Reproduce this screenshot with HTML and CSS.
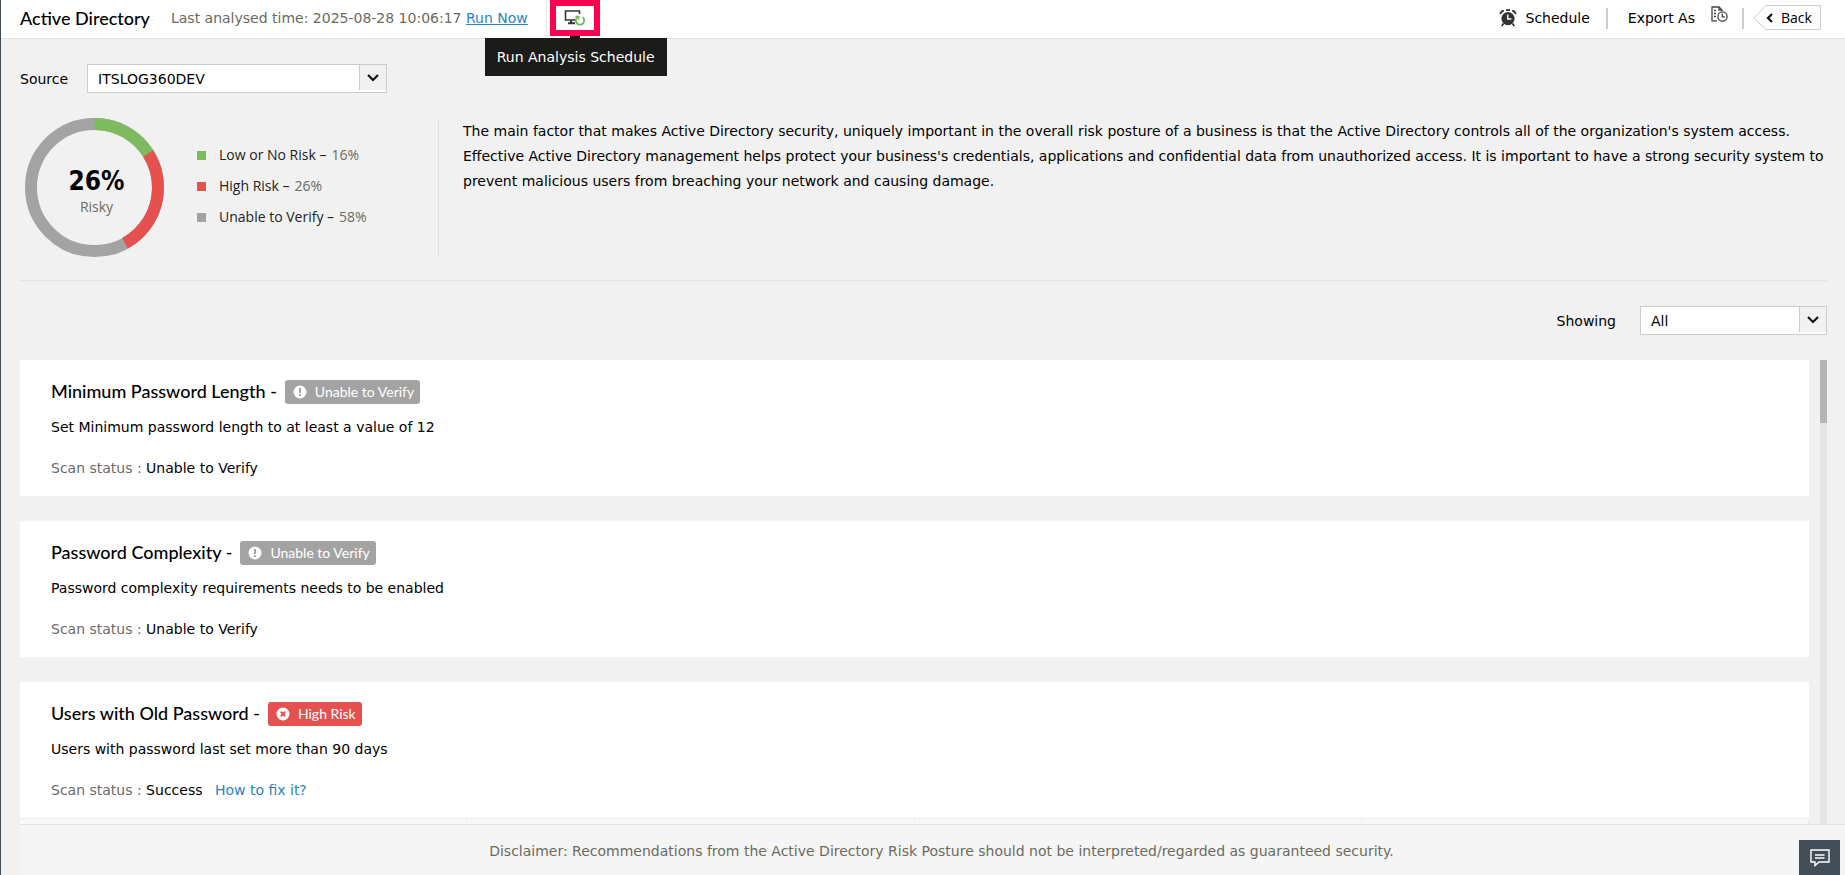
FILE: index.html
```html
<!DOCTYPE html>
<html lang="en">
<head>
  <meta charset="UTF-8" />
  <title>Active Directory Risk Posture</title>
  <link rel="stylesheet" href="styles.css">
</head>
<body>

  <!-- Top bar -->
  <header class="topbar">
    <h1>Active Directory</h1>
    <p class="analysed">Last analysed time: 2025-08-28 10:06:17 <a href="#">Run Now</a></p>
    <div class="run-schedule">
      <button class="run-button" aria-label="Run Analysis Schedule">
        <svg width="22" height="16" viewBox="0 0 22 16" fill="none">
          <path d="M11 10H1.5V1H15.5V4" stroke="#33383c" stroke-width="1.6"/>
          <path d="M7 10V13M4 13.2H11" stroke="#33383c" stroke-width="2"/>
          <path d="M18.6 7.2A4.2 4.2 0 1 1 13.4 7.2" stroke="#6fb456" stroke-width="1.7"/>
          <path d="M11.4 6.4H14.6V9.6" stroke="#6fb456" stroke-width="1.5"/>
        </svg>
      </button>
      <span class="tooltip" role="tooltip">Run Analysis Schedule</span>
    </div>

    <div class="actions">
      <button class="schedule">
        <svg width="18" height="18" viewBox="0 0 18 18">
          <circle cx="9" cy="9.6" r="6.6" fill="#333"/>
          <path d="M1.2 5.2A3 3 0 0 1 5 1.6ZM16.8 5.2A3 3 0 0 0 13 1.6Z" fill="#333" stroke="#333"/>
          <path d="M7 1.2H11M4.4 14.6L2.8 17M13.6 14.6L15.2 17" stroke="#333" stroke-width="1.8"/>
          <path d="M8.8 5.4V10H12.4" stroke="#fff" stroke-width="1.4" fill="none"/>
        </svg>
        Schedule
      </button>
      <span class="bar"></span>
      <button class="export">
        Export As
        <svg width="17" height="16" viewBox="0 0 17 16" fill="none" stroke="#444" stroke-width="1.3">
          <path d="M6 14.8H1V1H8L11 4V5"/>
          <path d="M8 1V4H11M3 4.5H5M3 7.5H5M3 10.5H5"/>
          <circle cx="11.5" cy="10.5" r="4.6"/>
          <path d="M11.3 7.6V10.8H14"/>
        </svg>
      </button>
      <span class="bar"></span>
      <a class="back" href="#">
        <svg class="back-shape" width="68" height="26" viewBox="0 0 68 26" fill="#fff" stroke="#ccc">
          <path d="M67.5 .5H13L.7 13L13 24.5H67.5Z"/>
        </svg>
        <svg width="8" height="10" viewBox="0 0 8 10" fill="none" stroke="#111" stroke-width="2.2">
          <path d="M6 1L2 5L6 9"/>
        </svg>
        Back
      </a>
    </div>
  </header>

  <main>
    <div class="source">
      <label for="source">Source</label>
      <div class="select source-select">
        <select id="source">
          <option>ITSLOG360DEV</option>
        </select>
        <span class="arrow"><svg width="12" height="8" viewBox="0 0 12 8"><path d="M1 1L6 6L11 1" fill="none" stroke="#111" stroke-width="2.2"/></svg></span>
      </div>
    </div>

    <!-- Risk summary -->
    <section class="summary">
      <div class="donut">
        <svg width="139" height="139" viewBox="0 0 139 139" fill="none" stroke-width="12">
          <circle cx="69.5" cy="69.5" r="63.5" stroke="#a3a3a3"/>
          <circle cx="69.5" cy="69.5" r="63.5" stroke="#7dbb5e" pathLength="100" stroke-dasharray="16 84" transform="rotate(-90 69.5 69.5)"/>
          <circle cx="69.5" cy="69.5" r="63.5" stroke="#e4514f" pathLength="100" stroke-dasharray="26 74" stroke-dashoffset="-16" transform="rotate(-90 69.5 69.5)"/>
        </svg>
        <div class="donut-text">
          <strong>26%</strong>
          <span>Risky</span>
        </div>
      </div>
      <ul class="legend">
        <li class="low">Low or No Risk – <span>16%</span></li>
        <li class="high">High Risk – <span>26%</span></li>
        <li class="unable">Unable to Verify – <span>58%</span></li>
      </ul>
      <p class="description">The main factor that makes Active Directory security, uniquely important in the overall risk posture of a business is that the Active Directory controls all of the organization's system access. Effective Active Directory management helps protect your business's credentials, applications and confidential data from unauthorized access. It is important to have a strong security system to prevent malicious users from breaching your network and causing damage.</p>
    </section>

    <div class="filter">
      <label for="showing">Showing</label>
      <div class="select showing-select">
        <select id="showing">
          <option>All</option>
        </select>
        <span class="arrow"><svg width="12" height="8" viewBox="0 0 12 8"><path d="M1 1L6 6L11 1" fill="none" stroke="#111" stroke-width="2.2"/></svg></span>
      </div>
    </div>

    <!-- Rules -->
    <div class="rules">
      <div class="rule-list">
        <article class="card">
          <h2>Minimum Password Length -
            <span class="badge">
              <svg width="14" height="14" viewBox="0 0 14 14"><circle cx="7" cy="7" r="6.5" fill="#fff"/><path d="M7 3V8M7 9.2V11" stroke="#a3a3a3" stroke-width="2"/></svg>
              Unable to Verify
            </span>
          </h2>
          <p>Set Minimum password length to at least a value of 12</p>
          <p class="status"><span>Scan status :</span> Unable to Verify</p>
        </article>

        <article class="card">
          <h2>Password Complexity -
            <span class="badge">
              <svg width="14" height="14" viewBox="0 0 14 14"><circle cx="7" cy="7" r="6.5" fill="#fff"/><path d="M7 3V8M7 9.2V11" stroke="#a3a3a3" stroke-width="2"/></svg>
              Unable to Verify
            </span>
          </h2>
          <p>Password complexity requirements needs to be enabled</p>
          <p class="status"><span>Scan status :</span> Unable to Verify</p>
        </article>

        <article class="card">
          <h2>Users with Old Password -
            <span class="badge badge-high">
              <svg width="14" height="14" viewBox="0 0 14 14"><circle cx="7" cy="7" r="6.5" fill="#fff"/><path d="M4.8 4.8L9.2 9.2M9.2 4.8L4.8 9.2" stroke="#e4514f" stroke-width="2"/></svg>
              High Risk
            </span>
          </h2>
          <p>Users with password last set more than 90 days</p>
          <p class="status"><span>Scan status :</span> Success <a href="#">How to fix it?</a></p>
          <div class="columns"><i></i><i></i><i></i><i></i></div>
        </article>
      </div>
      <div class="scrollbar"><div class="thumb"></div></div>
    </div>
  </main>

  <footer>Disclaimer: Recommendations from the Active Directory Risk Posture should not be interpreted/regarded as guaranteed security.</footer>

  <button class="chat" aria-label="Chat">
    <svg width="20" height="18" viewBox="0 0 20 18" fill="none" stroke="#fff" stroke-width="1.4">
      <path d="M1 1H19V13H9L5 16.5V13H1Z"/>
      <path d="M5 6H14.5M5 9H14.5"/>
    </svg>
  </button>

</body>
</html>
```

FILE: styles.css
```css
* {
  box-sizing: border-box;
}

body {
  margin: 0;
  height: 100vh;
  display: flex;
  flex-direction: column;
  overflow: hidden;
  border-left: 1px solid #3f4b55;
  background: #f1f1f1;
  color: #000;
  font-family: "DejaVu Sans", Verdana, sans-serif;
  font-size: 14px;
  line-height: 20px;
}

h1, h2, p, ul {
  margin: 0;
  padding: 0;
}

a {
  color: #2a83c4;
}

button, select {
  font: inherit;
  color: inherit;
  border: none;
  padding: 0;
  background: none;
}

button {
  cursor: pointer;
}

/* Top bar */
.topbar {
  display: flex;
  align-items: center;
  height: 39px;
  flex-shrink: 0;
  padding: 0 24px 2px 19px;
  background: #fff;
  border-bottom: 1px solid #e3e3e3;
}

h1, h2 {
  font-family: Lato, sans-serif;
  font-size: 18px;
  font-weight: 500;
}

.analysed {
  margin-left: 21px;
  color: #6b6b5f;
}

.run-schedule {
  position: relative;
  margin-left: 18px;
  padding-left: 3px;
  border-left: 1px solid #eee;
}

.run-button {
  display: flex;
  align-items: center;
  justify-content: center;
  width: 50px;
  height: 36px;
  border: 6px solid #ff0050;
}

.tooltip {
  position: absolute;
  top: 38px;
  left: -62px;
  padding: 9px 12px;
  background: #1b1b19;
  color: #fff;
  white-space: nowrap;
  z-index: 1;
}

.tooltip::before {
  content: "";
  position: absolute;
  top: -2px;
  left: 85px;
  width: 10px;
  height: 2px;
  background: #3b0d16;
}

.actions {
  display: flex;
  align-items: center;
  margin-left: auto;
}

.schedule, .export {
  display: flex;
  align-items: center;
  gap: 9px;
}

.export {
  gap: 16px;
}

.export svg {
  margin-bottom: 8px;
}

.bar {
  width: 2px;
  height: 21px;
  margin: 0 20px 0 16px;
  background: #ccc;
}

.export + .bar {
  margin: 0 9px 0 14px;
}

.back {
  position: relative;
  isolation: isolate;
  display: flex;
  align-items: center;
  gap: 7px;
  width: 68px;
  height: 26px;
  padding-left: 13px;
  color: #000;
  font-family: "Open Sans", sans-serif;
  text-decoration: none;
}

.back-shape {
  position: absolute;
  inset: 0;
  z-index: -1;
}

/* Content */
main {
  flex: 1;
  min-height: 0;
  display: flex;
  flex-direction: column;
  padding: 25px 18px 0 19px;
}

.source {
  display: flex;
  align-items: center;
  gap: 19px;
}

.select {
  display: grid;
  grid-template-columns: 1fr 27px;
  height: 29px;
  border: 1px solid #ccc;
  background: #fff;
}

.source-select {
  width: 300px;
}

.showing-select {
  width: 187px;
}

.select select {
  grid-area: 1 / 1 / 2 / 3;
  appearance: none;
  padding-left: 10px;
}

.arrow {
  grid-area: 1 / 2;
  display: flex;
  align-items: center;
  justify-content: center;
  margin-bottom: 2px;
  border-left: 1px solid #ccc;
  background: #f1f1f1;
  pointer-events: none;
}

.summary {
  display: flex;
  padding: 25px 0 23px 5px;
  border-bottom: 1px solid #e3e3e3;
}

.donut {
  display: grid;
  height: 139px;
}

.donut > * {
  grid-area: 1 / 1;
}

.donut-text {
  display: flex;
  flex-direction: column;
  align-items: center;
  padding: 48px 0 0 4px;
  font-family: "Open Sans", sans-serif;
  color: #6b6b5f;
}

.donut-text strong {
  color: #000;
  font-family: "DejaVu Sans Condensed", "DejaVu Sans", sans-serif;
  font-size: 26px;
  line-height: 31px;
}

.legend {
  width: 275px;
  padding: 27px 0 0 33px;
  border-right: 1px solid #e3e3e3;
  list-style: none;
  font-family: "Open Sans", sans-serif;
  color: #222;
}

.legend li {
  display: flex;
  align-items: center;
  gap: 5px;
  margin-bottom: 11px;
}

.legend li::before {
  content: "";
  width: 9px;
  height: 9px;
  margin-right: 8px;
  background: #a3a3a3;
}

.legend .low::before {
  background: #7dbb5e;
}

.legend .high::before {
  background: #e4514f;
}

.legend span {
  color: #6b6b5f;
}

.description {
  flex: 1;
  padding: 1px 0 0 24px;
  line-height: 25px;
}

.filter {
  display: flex;
  align-items: center;
  justify-content: flex-end;
  gap: 24px;
  padding: 25px 0;
}

/* Rules */
.rules {
  flex: 1;
  min-height: 0;
  display: flex;
  gap: 11px;
  overflow: hidden;
}

.rule-list {
  flex: 1;
  display: flex;
  flex-direction: column;
  gap: 25px;
}

.card {
  flex-shrink: 0;
  padding: 18px 31px;
  background: #fff;
}

.card h2 {
  display: flex;
  align-items: center;
  gap: 8px;
  height: 25px;
  margin-bottom: 14px;
}

.badge {
  display: flex;
  align-items: center;
  gap: 8px;
  height: 24px;
  margin-top: 3px;
  padding: 0 6px 0 8px;
  border-radius: 3px;
  background: #a3a3a3;
  color: #fff;
  font-size: 14px;
  font-weight: 400;
}

.badge-high {
  background: #e4514f;
}

.status {
  margin-top: 21px;
}

.status span {
  color: #6b6b6b;
}

.status a {
  margin-left: 8px;
  text-decoration: none;
}

.columns {
  display: grid;
  grid-template-columns: repeat(4, 1fr);
  height: 40px;
  margin: 18px -31px -18px;
  border-top: 1px solid #eee;
  background: #f7f8fa;
}

.columns i {
  border-right: 1px solid #eee;
}

.scrollbar {
  width: 7px;
  background: #e3e6e5;
}

.thumb {
  height: 63px;
  background: #b1b7b6;
}

footer {
  flex-shrink: 0;
  height: 51px;
  margin-left: 19px;
  padding: 16px 0 0 18px;
  border-top: 1px solid #e3e3e3;
  background: #f5f5f5;
  color: #6b6b5f;
  text-align: center;
}

.chat {
  position: fixed;
  right: 5px;
  bottom: 0;
  display: flex;
  align-items: center;
  justify-content: center;
  width: 41px;
  height: 35px;
  background: #424e57;
}
```
